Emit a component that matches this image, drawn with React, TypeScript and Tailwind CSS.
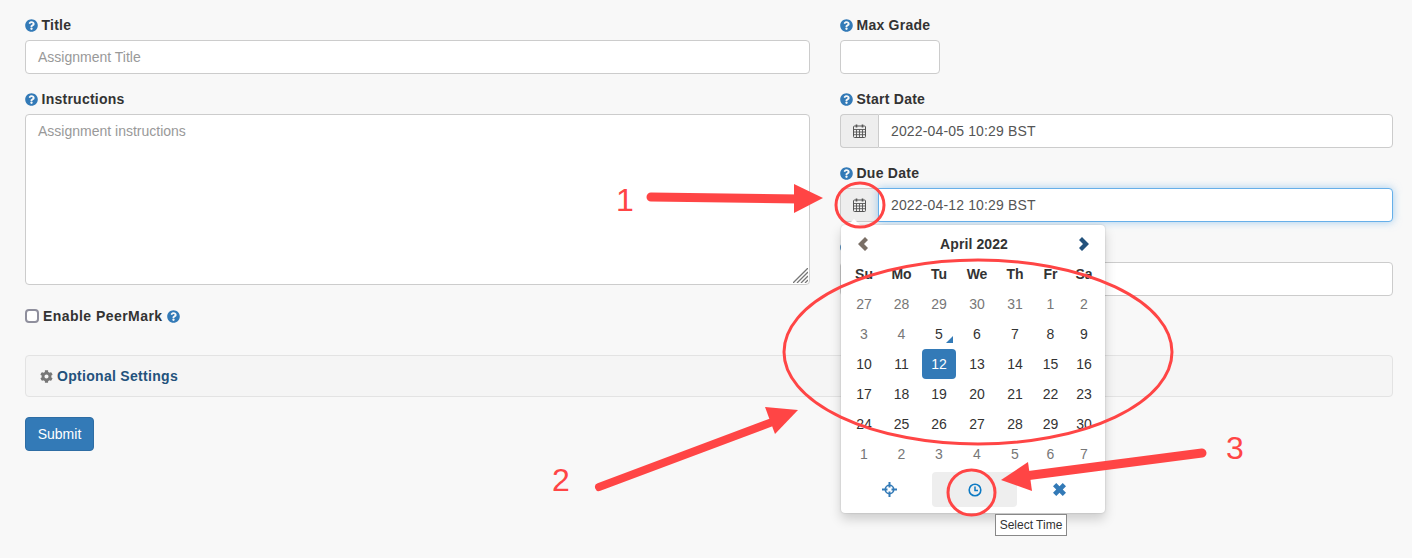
import { ReactNode } from "react";
import { FaCog, FaQuestionCircle } from "react-icons/fa";

const WEEKDAYS = ["Su", "Mo", "Tu", "We", "Th", "Fr", "Sa"];

const WEEKS = [
  [27, 28, 29, 30, 31, 1, 2],
  [3, 4, 5, 6, 7, 8, 9],
  [10, 11, 12, 13, 14, 15, 16],
  [17, 18, 19, 20, 21, 22, 23],
  [24, 25, 26, 27, 28, 29, 30],
  [1, 2, 3, 4, 5, 6, 7],
];

const COLS = "grid grid-cols-[38px_37px_38px_38px_38px_33px_34px]";
const RED = "#ff4545";

function isMuted(week: number, day: number) {
  if (week === 0) return day > 7 || day < 3;
  if (week === 1) return day < 5;
  return week === 5;
}

function Help() {
  return <FaQuestionCircle className="h-[13px] w-[13px] shrink-0 text-[#337ab7]" />;
}

function Label({ children }: { children: ReactNode }) {
  return (
    <label className="mb-[5px] flex h-5 items-center gap-[3.5px] text-sm font-bold tracking-[0.25px] text-[#333]">
      <Help />
      {children}
    </label>
  );
}

function CalendarIcon() {
  return (
    <svg viewBox="0 0 13 14" className="h-[14px] w-[13px] text-[#555]" fill="none" stroke="currentColor">
      <rect x="0.5" y="2" width="12" height="11.5" rx="1" />
      <path d="M0.5 5.5h12M0.5 8h12M0.5 10.7h12M3.5 5.5v8M6.5 5.5v8M9.5 5.5v8" strokeWidth="0.9" />
      <path d="M3.5 0.5v3M9.5 0.5v3" strokeWidth="1.6" />
    </svg>
  );
}

function DateField({ value, focused }: { value: string; focused?: boolean }) {
  return (
    <div className="flex h-[34px]">
      <span className="flex w-[38px] items-center justify-center rounded-l border border-r-0 border-[#ccc] bg-[#eee]">
        <CalendarIcon />
      </span>
      <div
        className={
          focused
            ? "flex flex-1 items-center rounded-r border border-[#66afe9] bg-white px-3 text-sm tracking-[0.15px] text-[#555] shadow-[0_0_8px_rgba(102,175,233,0.6)]"
            : "flex flex-1 items-center rounded-r border border-[#ccc] bg-white px-3 text-sm tracking-[0.15px] text-[#555]"
        }
      >
        {value}
      </div>
    </div>
  );
}

function DatePicker() {
  return (
    <div className="absolute left-[841px] top-[225px] h-[288px] w-[264px] rounded bg-white px-1 pt-1 text-sm text-[#333] shadow-[0_6px_12px_rgba(0,0,0,0.175),0_0_2px_rgba(0,0,0,0.2)]">
      <div className="absolute -top-[6px] left-[7px] h-0 w-0 border-x-[6px] border-b-[6px] border-x-transparent border-b-white" />
      <div className={`${COLS} h-[30px] items-center text-center`}>
        <span className="flex justify-center pr-[2px] text-[#7a6f66]">
          <svg viewBox="0 0 10 14" className="h-[14px] w-[10px]" fill="currentColor">
            <path d="M7 0L10 3L6 7L10 11L7 14L0 7Z" />
          </svg>
        </span>
        <span className="col-span-5 pr-[2px] font-bold tracking-[0.1px]">April 2022</span>
        <span className="flex justify-center text-[#23527c]">
          <svg viewBox="0 0 10 14" className="h-[14px] w-[10px]" fill="currentColor">
            <path d="M3 0L0 3L4 7L0 11L3 14L10 7Z" />
          </svg>
        </span>
      </div>
      <div className={`${COLS} h-[30px] items-center text-center font-bold`}>
        {WEEKDAYS.map((d) => (
          <span key={d}>{d}</span>
        ))}
      </div>
      {WEEKS.map((week, w) => (
        <div key={w} className={`${COLS} h-[30px] items-center text-center`}>
          {week.map((day) => {
            const selected = w === 2 && day === 12;
            const today = w === 1 && day === 5;
            return (
              <span
                key={day}
                className={
                  selected
                    ? "mx-auto flex h-[30px] w-[34px] items-center justify-center rounded bg-[#337ab7] text-white"
                    : isMuted(w, day)
                      ? "text-[#777]"
                      : "relative"
                }
              >
                {day}
                {today && (
                  <span className="absolute bottom-[1px] right-[5px] h-0 w-0 border-b-[7px] border-l-[7px] border-b-[#337ab7] border-l-transparent" />
                )}
              </span>
            );
          })}
        </div>
      ))}
      <div className="mt-[3px] ml-[2px] grid h-[35px] w-[255px] grid-cols-3 items-center text-[#337ab7]">
        <span className="flex justify-center">
          <svg viewBox="0 0 15 15" className="h-[15px] w-[15px]" fill="none" stroke="currentColor">
            <circle cx="7.5" cy="7.5" r="4.2" strokeWidth="1.6" />
            <path d="M7.5 0v5.5M7.5 9.5v5.5M0 7.5h5.5M9.5 7.5h5.5" strokeWidth="2" />
          </svg>
        </span>
        <span className="flex h-[35px] items-center justify-center rounded bg-[#eee] text-[#0d7ac4]">
          <svg viewBox="0 0 14 14" className="h-[14px] w-[14px]" fill="none" stroke="currentColor">
            <circle cx="7" cy="7" r="5.8" strokeWidth="1.6" />
            <path d="M7 3.4V7.6H10" strokeWidth="1.5" />
          </svg>
        </span>
        <span className="flex justify-center">
          <svg viewBox="0 0 12 12" className="h-[13px] w-[13px]" fill="currentColor">
            <path d="M3 0L6 3L9 0L12 3L9 6L12 9L9 12L6 9L3 12L0 9L3 6L0 3Z" />
          </svg>
        </span>
      </div>
    </div>
  );
}

// red call-outs painted on top of the screenshot
function Annotations() {
  return (
    <>
      <svg className="absolute left-0 top-0 h-[558px] w-[1412px]" viewBox="0 0 1412 558" fill="none" stroke={RED}>
        <ellipse cx="860" cy="205" rx="24" ry="22" strokeWidth="3" />
        <ellipse cx="978" cy="352" rx="194" ry="92" strokeWidth="3" />
        <ellipse cx="971.5" cy="492.5" rx="23.5" ry="22.5" strokeWidth="3" />
        <path d="M651 197L800 199" strokeWidth="9" strokeLinecap="round" />
        <path d="M794 184L823 198L794 213Z" fill={RED} stroke="none" />
        <path d="M599 487L775 421" strokeWidth="8" strokeLinecap="round" />
        <path d="M765 407L798 410L775 434Z" fill={RED} stroke="none" />
        <path d="M1202 453L1025 476" strokeWidth="9" strokeLinecap="round" />
        <path d="M1028 462L1001 480L1032 491Z" fill={RED} stroke="none" />
      </svg>
      <span className="absolute left-[616px] top-[180px] text-[32px] leading-10 text-[#ff4545]">1</span>
      <span className="absolute left-[552px] top-[460px] text-[32px] leading-10 text-[#ff4545]">2</span>
      <span className="absolute left-[1226px] top-[428px] text-[32px] leading-10 text-[#ff4545]">3</span>
    </>
  );
}

export default function App() {
  return (
    <div className="relative h-[558px] w-[1412px] overflow-hidden bg-[#f8f8f8] px-[25px] pt-[15px] font-['Liberation_Sans',Arial,sans-serif]">
      <div className="flex w-[1368px] gap-[30px]">
        <div className="w-[785px]">
          <Label>Title</Label>
          <div className="mb-[15px] flex h-[34px] items-center rounded border border-[#ccc] bg-white px-3 text-sm text-[#999]">
            Assignment Title
          </div>
          <Label>Instructions</Label>
          <div className="relative h-[171px] rounded border border-[#ccc] bg-white px-3 py-[6px] text-sm text-[#999]">
            Assignment instructions
            <svg viewBox="0 0 15 15" className="absolute bottom-[1px] right-[1px] h-[15px] w-[15px]" stroke="#777" strokeWidth="1.3">
              <path d="M15 0L0 15M15 4L4 15M15 8L8 15M15 12L12 15" />
            </svg>
          </div>
          <div className="mt-[24px] flex h-[14px] items-center text-sm font-bold tracking-[0.45px] text-[#333]">
            <span className="mr-1 h-[14px] w-[14px] rounded-sm border-2 border-[#8f8f9d] bg-white" />
            Enable PeerMark
            <span className="ml-1">
              <Help />
            </span>
          </div>
        </div>
        <div className="w-[553px]">
          <Label>Max Grade</Label>
          <div className="mb-[15px] h-[34px] w-[100px] rounded border border-[#ccc] bg-white" />
          <Label>Start Date</Label>
          <div className="mb-[15px]">
            <DateField value="2022-04-05 10:29 BST" />
          </div>
          <Label>Due Date</Label>
          <div className="mb-[15px]">
            <DateField value="2022-04-12 10:29 BST" focused />
          </div>
          <div className="mb-[5px] flex h-5 items-center">
            <Help />
          </div>
          <div className="h-[34px] rounded border border-[#ccc] bg-white" />
        </div>
      </div>
      <div className="mt-[32px] flex h-[42px] w-[1368px] items-center gap-1 rounded border border-[#e3e3e3] bg-[#f5f5f5] px-[14px] text-sm font-bold tracking-[0.3px] text-[#23527c]">
        <FaCog className="h-[13px] w-[13px] text-[#777]" />
        Optional Settings
      </div>
      <button className="mt-5 flex h-[34px] w-[69px] items-center justify-center rounded border border-[#2e6da4] bg-[#337ab7] text-sm text-white">
        Submit
      </button>
      <DatePicker />
      <span className="absolute left-[995px] top-[514px] flex h-[22px] w-[72px] items-center justify-center border border-[#888] bg-white text-xs text-[#333]">
        Select Time
      </span>
      <Annotations />
    </div>
  );
}
